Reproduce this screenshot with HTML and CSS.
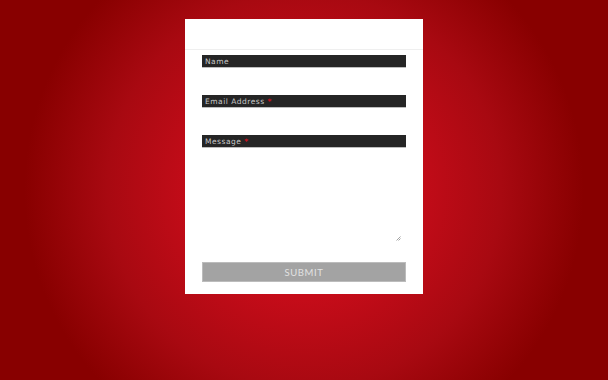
FILE: index.html
```html
<!DOCTYPE html>
<html>
<head>
<meta charset="utf-8">
<link rel="stylesheet" href="styles.css">
</head>
<body>
<div class="page">
  <div class="card">
    <div class="card-head"></div>
    <form class="form">
      <div class="field">
        <div class="label">Name</div>
        <div class="input"></div>
      </div>
      <div class="field">
        <div class="label">Email Address <span class="req">*</span></div>
        <div class="input"></div>
      </div>
      <div class="field">
        <div class="label">Message <span class="req">*</span></div>
        <div class="area">
          <svg class="grip" width="5" height="5" viewBox="0 0 5 5"><path d="M4.5 0.5 L0.5 4.5 M4.5 2.5 L2.5 4.5" stroke="#9a9a9a" stroke-width="0.9" fill="none"/></svg>
        </div>
      </div>
      <button type="button" class="submit">SUBMIT</button>
    </form>
  </div>
</div>
</body>
</html>
```
FILE: styles.css
```css
html, body {
  margin: 0;
  padding: 0;
  height: 100%;
}
body {
  background: radial-gradient(circle farthest-corner at 50% 50%, #ca0d1b 0%, #c50c19 30%, #a80911 55%, #880000 78%, #880000 100%);
  font-family: "DejaVu Sans", sans-serif;
}
.page {
  display: flex;
  justify-content: center;
  padding-top: 19px;
}
.card {
  width: 238px;
  background: #fff;
  box-sizing: border-box;
}
.card-head {
  height: 30px;
  border-bottom: 1px solid #efefef;
}
.form {
  display: flex;
  flex-direction: column;
  padding: 5px 17px 12px 17px;
  margin: 0;
}
.field {
  display: flex;
  flex-direction: column;
}
.label {
  height: 13px;
  background: #252525;
  border-bottom: 1px solid #bdbdbd;
  box-sizing: border-box;
  color: #c8c8c8;
  font-family: "DejaVu Sans", sans-serif;
  font-size: 7.5px;
  line-height: 13px;
  padding-left: 3px;
  letter-spacing: 0.5px;
}
.req {
  color: #d0101e;
  font-weight: bold;
}
.input {
  height: 27px;
}
.area {
  position: relative;
  height: 96px;
}
.grip {
  position: absolute;
  right: 5px;
  bottom: 3px;
}
.submit {
  margin-top: 18px;
  height: 20px;
  background: #a3a3a3;
  border: 1px solid #bcbcbc;
  color: #e2e2e2;
  font-family: "Lato", sans-serif;
  font-weight: 400;
  font-size: 9.5px;
  letter-spacing: 0.6px;
  padding: 0;
}
```
